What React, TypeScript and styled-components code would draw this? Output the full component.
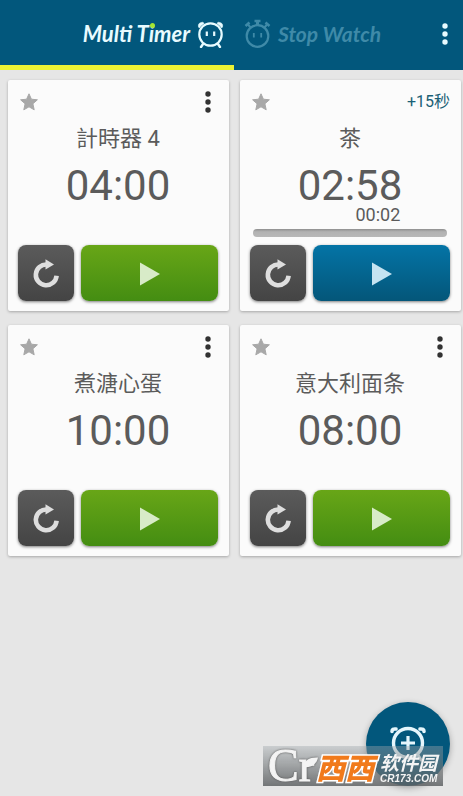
import React from "react";
import styled, { createGlobalStyle } from "styled-components";

const GlobalStyle = createGlobalStyle`
  *, *::before, *::after { box-sizing: border-box; }
  body {
    margin: 0;
    background: #e6e6e6;
    font-family: Roboto, "Noto Sans CJK SC", sans-serif;
    color: #5b5b5b;
  }
  button { font: inherit; border: 0; padding: 0; background: none; cursor: pointer; }
`;

const Page = styled.div`
  min-height: 100vh;
  display: flex;
  flex-direction: column;
`;

const Header = styled.header`
  position: relative;
  background: #02577c;
`;

const Tabs = styled.nav`
  display: grid;
  grid-template-columns: 234fr 229fr;
`;

const Tab = styled.button<{ $active?: boolean }>`
  height: 70px;
  display: flex;
  align-items: center;
  justify-content: ${(p) => (p.$active ? "flex-end" : "flex-start")};
  gap: 7px;
  padding: ${(p) => (p.$active ? "3px 10px 0 0" : "2px 0 0 10px")};
  border-bottom: 5px solid ${(p) => (p.$active ? "#ecf235" : "transparent")};
  color: ${(p) => (p.$active ? "#e8fbff" : "#3f8aa8")};
  font-size: ${(p) => (p.$active ? "22px" : "21px")};
`;

const TabLabel = styled.span`
  font-family: Lato, sans-serif;
  line-height: 28px;
  font-weight: 700;
  font-style: italic;
  white-space: nowrap;
`;

const Dotted = styled.span`
  position: relative;
  &::after {
    content: "";
    position: absolute;
    top: 3px;
    right: -1px;
    width: 5px;
    height: 5px;
    border-radius: 50%;
    background: #a5e632;
  }
`;

const HeaderMenu = styled.button`
  position: absolute;
  top: 18px;
  right: 8px;
  width: 20px;
  height: 32px;
  color: #e8fbff;
  display: grid;
  place-items: center;
`;

const Grid = styled.main`
  display: grid;
  grid-template-columns: 1fr 1fr;
  gap: 14px 11px;
  padding: 10px 2px 14px 8px;
`;

const Card = styled.article`
  display: flex;
  flex-direction: column;
  height: 231px;
  padding: 10px 11px 10px 10px;
  background: #fbfbfb;
  border-radius: 2px;
  box-shadow: 0 1px 3px rgba(0, 0, 0, 0.28);
`;

const CardTop = styled.div`
  display: flex;
  justify-content: space-between;
  align-items: center;
  height: 24px;
`;

const IconButton = styled.button`
  width: 21px;
  height: 24px;
  display: grid;
  place-items: center;
  color: #323232;
`;

const ExtendButton = styled.button`
  font-size: 16px;
  line-height: 24px;
  color: #1a6076;
`;

const Title = styled.h2`
  margin: 9px 0 0;
  font-size: 22px;
  line-height: 32px;
  font-weight: 400;
  text-align: center;
`;

const Clock = styled.div`
  width: max-content;
  margin: 10px auto 0;
  text-align: right;
`;

const Time = styled.div`
  font-size: 42px;
  line-height: 42px;
`;

const Elapsed = styled.div`
  padding-right: 2px;
  font-size: 18px;
  line-height: 16px;
`;

const Progress = styled.div`
  height: 8px;
  margin: 6px 3px 0;
  border-radius: 4px;
  background: linear-gradient(#8f8f8f, #b2b2b2 35%, #b8b8b8);
`;

const Actions = styled.div`
  display: flex;
  gap: 7px;
  margin-top: auto;
`;

const ResetButton = styled.button`
  flex: none;
  width: 56px;
  height: 56px;
  display: grid;
  place-items: center;
  border-radius: 8px;
  background: linear-gradient(#5b5b5b, #444);
  box-shadow: 0 1px 3px rgba(0, 0, 0, 0.5);
`;

const PlayButton = styled.button<{ $blue?: boolean }>`
  flex: 1;
  height: 56px;
  display: grid;
  place-items: center;
  border-radius: 8px;
  color: ${(p) => (p.$blue ? "#c5e3f1" : "#d8ebc8")};
  background: ${(p) =>
    p.$blue ? "linear-gradient(#0474a6, #045679)" : "linear-gradient(#68a617, #448d12)"};
  box-shadow: 0 1px 3px rgba(0, 0, 0, 0.5);
`;

const AddButton = styled.button`
  position: fixed;
  right: 13px;
  bottom: 10px;
  width: 84px;
  height: 84px;
  display: grid;
  place-items: center;
  border-radius: 50%;
  background: #02577c;
  box-shadow: 0 2px 6px rgba(0, 0, 0, 0.3);
`;

const Watermark = styled.aside`
  position: fixed;
  right: 20px;
  bottom: 10px;
  width: 180px;
  height: 40px;
  display: flex;
  align-items: center;
  gap: 2px;
  padding-left: 5px;
  white-space: nowrap;
  background: linear-gradient(rgba(160, 168, 172, 0.4), rgba(95, 98, 100, 0.85));
  color: #f4f4f4;
`;

const Monogram = styled.span`
  position: relative;
  flex: none;
  font-family: "Liberation Serif", serif;
  font-size: 46px;
  line-height: 40px;
  -webkit-text-stroke: 1px #f4f4f4;
  filter: drop-shadow(0 0 1px #555);
`;

const Leaf = styled.svg`
  position: absolute;
  right: -5px;
  top: 10px;
`;

const Tiles = styled.span`
  flex: none;
  font-family: "Noto Sans CJK SC", sans-serif;
  font-size: 29px;
  line-height: 36px;
  font-weight: 900;
  font-style: italic;
  color: #f17a1b;
  -webkit-text-stroke: 3px #fff;
  paint-order: stroke fill;
`;

const SiteName = styled.span`
  display: flex;
  flex-direction: column;
  padding: 4px 0 0 4px;
  font-family: "Noto Sans CJK SC", sans-serif;
  font-size: 19px;
  line-height: 22px;
  font-weight: 700;
  font-style: italic;
`;

const SiteUrl = styled.small`
  font-family: "Liberation Sans", sans-serif;
  font-size: 10px;
  line-height: 12px;
  font-weight: 700;
`;

const Dots = () => (
  <svg width="6" height="22" viewBox="0 0 6 22" fill="currentColor" aria-hidden="true">
    <circle cx="3" cy="3" r="2.7" />
    <circle cx="3" cy="11" r="2.7" />
    <circle cx="3" cy="19" r="2.7" />
  </svg>
);

const Star = () => (
  <svg width="18" height="18" viewBox="0 0 18 18" aria-hidden="true">
    <path
      d="M9 .8l2.4 5.400 6 .6-4.500 4 1.300 6L9 13.800l-5.200 3 1.300-6-4.500-4 6-.6z"
      fill="#a8a8a8"
      stroke="#a8a8a8"
      strokeLinejoin="round"
    />
  </svg>
);

const ClockFace = () => (
  <svg width="27" height="27" viewBox="0 0 27 27" fill="none" stroke="currentColor" aria-hidden="true">
    <circle cx="13.5" cy="13.5" r="11.2" strokeWidth="2.2" />
    <path d="M9.8 10.5v4.500M17.200 10.500v4.500" strokeWidth="2.200" />
    <path d="M6 23l-2 3M21 23l2 3" strokeWidth="2.400" strokeLinecap="round" />
    <path d="M1.500 6Q.5 1.500 6 1.200L7 2.500Q3.500 4.500 2.500 7zM25.500 6Q26.500 1.500 21 1.200L20 2.500Q23.500 4.500 24.500 7z" fill="currentColor" strokeWidth=".6" />
  </svg>
);

const StopWatchFace = () => (
  <svg width="27" height="29" viewBox="0 0 27 29" fill="none" stroke="currentColor" aria-hidden="true">
    <circle cx="13.5" cy="17" r="10.800" strokeWidth="2.200" />
    <path d="M9.800 14v4.500M17.200 14v4.500" strokeWidth="1.800" />
    <path d="M13.500 2v4" strokeWidth="3" />
    <path d="M10.500 2h6M1.500 7l4-3.500M25.500 7l-4-3.500" strokeWidth="2.600" />
    <path d="M4 5.500l3 3.500M23 5.500l-3 3.500" strokeWidth="2" />
  </svg>
);

const ResetIcon = () => (
  <svg width="28" height="30" viewBox="0 0 28 30" aria-hidden="true">
    <path d="M15 6.500A10.400 10.400 0 1 0 24.600 17.800" fill="none" stroke="#dedede" strokeWidth="4.600" />
    <path d="M13.500 1.200l8.500 5.300-8.500 5z" fill="#dedede" />
  </svg>
);

const PlayIcon = () => (
  <svg width="20" height="26" viewBox="0 0 20 26" aria-hidden="true">
    <path d="M0 2.500L20 14 0 25.500z" fill="currentColor" />
  </svg>
);

const AddIcon = () => (
  <svg width="38" height="38" viewBox="0 0 38 38" fill="none" stroke="#e5f6fc" aria-hidden="true">
    <circle cx="19" cy="18" r="14.5" strokeWidth="3.400" />
    <path d="M19 11v14M12 18h14" strokeWidth="3.200" />
    <path d="M3 6.500Q3 3.500 7 4M35 6.500Q35 3.500 31 4" strokeWidth="3.600" strokeLinecap="round" />
    <path d="M9 30l-3 5M29 30l3 5" strokeWidth="3" strokeLinecap="round" />
  </svg>
);

type Timer = { name: string; time: string; elapsed?: string; extend?: string };

const timers: Timer[] = [
  { name: "計時器 4", time: "04:00" },
  { name: "茶", time: "02:58", elapsed: "00:02", extend: "+15秒" },
  { name: "煮溏心蛋", time: "10:00" },
  { name: "意大利面条", time: "08:00" },
];

const TimerCard = ({ name, time, elapsed, extend }: Timer) => (
  <Card>
    <CardTop>
      <IconButton aria-label="Favorite"><Star /></IconButton>
      {extend ? <ExtendButton>{extend}</ExtendButton> : <IconButton aria-label="Options"><Dots /></IconButton>}
    </CardTop>
    <Title>{name}</Title>
    <Clock>
      <Time>{time}</Time>
      {elapsed && <Elapsed>{elapsed}</Elapsed>}
    </Clock>
    {elapsed && <Progress />}
    <Actions>
      <ResetButton aria-label="Reset"><ResetIcon /></ResetButton>
      <PlayButton aria-label="Start" $blue={Boolean(elapsed)}><PlayIcon /></PlayButton>
    </Actions>
  </Card>
);

export default function App() {
  return (
    <Page>
      <GlobalStyle />
      <Header>
        <Tabs>
          <Tab $active>
            <TabLabel>Multi T<Dotted>i</Dotted>mer</TabLabel>
            <ClockFace />
          </Tab>
          <Tab>
            <StopWatchFace />
            <TabLabel>Stop Watch</TabLabel>
          </Tab>
        </Tabs>
        <HeaderMenu aria-label="More"><Dots /></HeaderMenu>
      </Header>
      <Grid>
        {timers.map((t) => <TimerCard key={t.name} {...t} />)}
      </Grid>
      <AddButton aria-label="Add timer"><AddIcon /></AddButton>
      <Watermark>
        <Monogram>
          Cr
          <Leaf width="16" height="12" viewBox="0 0 16 12" aria-hidden="true">
            <path d="M1 11C1 4 7 1 15 1.500 14 8 8 12 1 11z" fill="#f4f4f4" />
          </Leaf>
        </Monogram>
        <Tiles>西西</Tiles>
        <SiteName>软件园<SiteUrl>CR173.COM</SiteUrl></SiteName>
      </Watermark>
    </Page>
  );
}
